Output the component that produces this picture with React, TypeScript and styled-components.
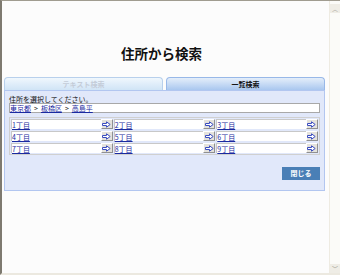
import React from 'react';
import styled, { createGlobalStyle } from 'styled-components';

const GlobalStyle = createGlobalStyle`
  html, body {
    margin: 0;
    padding: 0;
    background: #fcfcfc;
  }
  body {
    font-family: "Noto Sans CJK JP", "Noto Sans", sans-serif;
  }
`;

const areas = ['1丁目', '2丁目', '3丁目', '4丁目', '5丁目', '6丁目', '7丁目', '8丁目', '9丁目'];

function ArrowIcon() {
  return (
    <svg width="9" height="7" viewBox="0 0 9 7">
      <path d="M0.5 2.5 H4.5 V0.8 L8.2 3.5 L4.5 6.2 V4.5 H0.5 Z" fill="#ffffff" stroke="#3a4cc0" strokeWidth="1" />
    </svg>
  );
}

function App() {
  return (
    <>
      <GlobalStyle />
      <Frame>
        <Main>
          <Title>住所から検索</Title>
          <Tabs>
            <Tab $active={false}>テキスト検索</Tab>
            <Tab $active>一覧検索</Tab>
          </Tabs>
          <Panel>
            <Guide>住所を選択してください。</Guide>
            <Crumbs>
              <Link>東京都</Link>
              <Sep>&gt;</Sep>
              <Link>板橋区</Link>
              <Sep>&gt;</Sep>
              <Link>高島平</Link>
            </Crumbs>
            <Grid>
              {areas.map((a) => (
                <Cell key={a}>
                  <Link>{a}</Link>
                  <GoButton>
                    <ArrowIcon />
                  </GoButton>
                </Cell>
              ))}
            </Grid>
            <Footer>
              <CloseButton>閉じる</CloseButton>
            </Footer>
          </Panel>
        </Main>
        <ScrollBar>
          <ScrollArrow>︿</ScrollArrow>
          <ScrollArrow>﹀</ScrollArrow>
        </ScrollBar>
      </Frame>
    </>
  );
}

export default App;

const Frame = styled.div`
  display: flex;
  width: 340px;
  height: 275px;
  box-sizing: border-box;
  border-top: 1px solid #a09c90;
  border-left: 2px solid #7e7a70;
  border-bottom: 2px solid #ece9e0;
`;

const Main = styled.div`
  flex: 1;
  display: flex;
  flex-direction: column;
  padding: 0 4px 0 2px;
`;

const Title = styled.div`
  margin-top: 42px;
  height: 20px;
  line-height: 20px;
  text-align: center;
  font-size: 13.5px;
  font-weight: bold;
  color: #111;
  padding-right: 6px;
`;

const Tabs = styled.div`
  display: flex;
  gap: 3px;
  margin-top: 14px;
`;

const Tab = styled.div<{ $active: boolean }>`
  flex: 1;
  height: 13px;
  line-height: 13px;
  box-sizing: border-box;
  border: 1px solid ${({ $active }) => ($active ? '#98b8e8' : '#b8d0ec')};
  border-bottom: none;
  border-radius: 4px 4px 0 0;
  text-align: center;
  font-size: 7px;
  font-weight: bold;
  color: ${({ $active }) => ($active ? '#111' : '#c4ccd8')};
  background: ${({ $active }) =>
    $active
      ? 'linear-gradient(#e4eefa, #a9c7ef)'
      : 'linear-gradient(#f0f7fd, #d0e4f6)'};
`;

const Panel = styled.div`
  display: flex;
  flex-direction: column;
  height: 101px;
  box-sizing: border-box;
  padding: 4px 4px 0 4px;
  background: #e1e8fa;
  border: 1px solid #b2c6f0;
`;

const Guide = styled.div`
  font-size: 7px;
  line-height: 8px;
  color: #111;
`;

const Crumbs = styled.div`
  display: flex;
  align-items: center;
  height: 8px;
  background: #fff;
  border: 1px solid #a8a8a8;
  font-size: 7px;
  line-height: 8px;
`;

const Link = styled.span`
  color: #1a2aa0;
  text-decoration: underline;
  font-size: 7px;
  line-height: 8px;
`;

const Sep = styled.span`
  color: #222;
  margin: 0 3px;
`;

const Grid = styled.div`
  display: grid;
  grid-template-columns: repeat(3, 1fr);
  gap: 2px 1px;
  margin-top: 4px;
  padding: 1px;
  border: 1px solid #d0d0d0;
  background: #e1e8fa;
`;

const Cell = styled.div`
  display: flex;
  align-items: center;
  justify-content: space-between;
  height: 10px;
  box-sizing: border-box;
  background: #fff;
  border-top: 1px solid #c8c8c8;
  border-left: 1px solid #c8c8c8;
`;

const GoButton = styled.div`
  display: flex;
  align-items: center;
  justify-content: center;
  width: 12px;
  height: 10px;
  margin-top: -1px;
  box-sizing: border-box;
  background: #e4e2dc;
  border-right: 1px solid #909090;
  border-bottom: 1px solid #909090;
  border-left: 1px solid #fff;
  border-top: 1px solid #fff;
`;

const Footer = styled.div`
  display: flex;
  justify-content: flex-end;
  margin-top: 12px;
`;

const CloseButton = styled.div`
  width: 38px;
  height: 13px;
  line-height: 13px;
  text-align: center;
  background: #4a7fb6;
  color: #fff;
  font-size: 7px;
  font-weight: bold;
`;

const ScrollBar = styled.div`
  width: 10px;
  display: flex;
  flex-direction: column;
  justify-content: space-between;
  background: #fbfbf8;
  border-left: 1px solid #eeebe2;
  padding: 3px 0 0 0;
`;

const ScrollArrow = styled.div`
  height: 9px;
  line-height: 9px;
  text-align: center;
  font-size: 6px;
  color: #9a9a90;
  background: #efede6;
`;
